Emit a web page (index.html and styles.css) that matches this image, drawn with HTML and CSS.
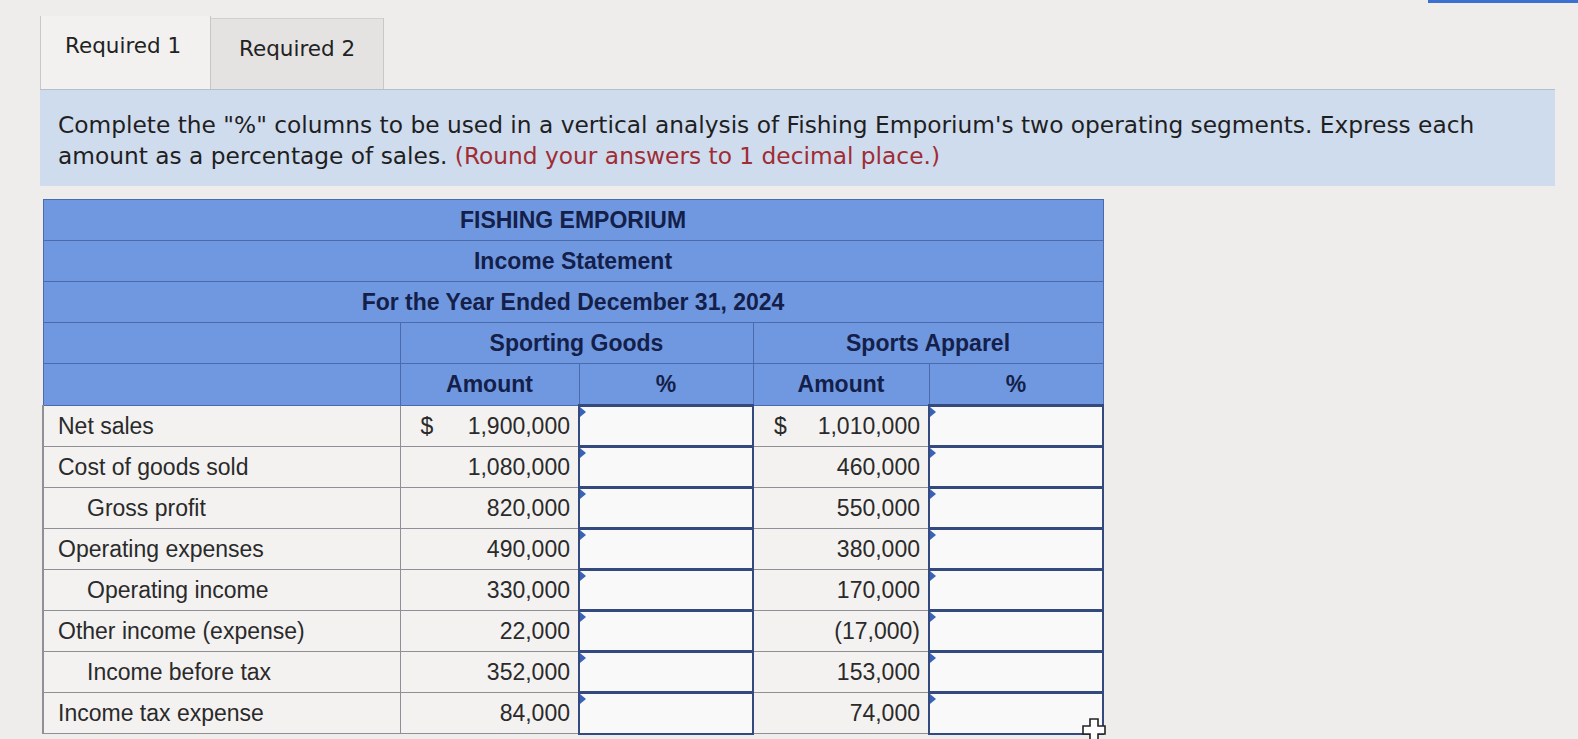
FILE: index.html
```html
<!DOCTYPE html>
<html>
<head>
<meta charset="utf-8">
<link rel="stylesheet" href="styles.css">
</head>
<body>
<div class="topbar"></div>
<div class="page">
  <div class="tabs">
    <div class="tab active">Required 1</div>
    <div class="tab">Required 2</div>
  </div>
  <div class="instr">
    <div class="line">Complete the "%" columns to be used in a vertical analysis of Fishing Emporium's two operating segments. Express each</div>
    <div class="line"><span>amount as a percentage of sales.</span> <span class="red">(Round your answers to 1 decimal place.)</span></div>
  </div>
  <table class="stmt">
    <colgroup>
      <col class="c-label"><col class="c-amt"><col class="c-pct"><col class="c-amt2"><col class="c-pct">
    </colgroup>
    <thead>
      <tr><th colspan="5" class="title">FISHING EMPORIUM</th></tr>
      <tr><th colspan="5" class="title">Income Statement</th></tr>
      <tr><th colspan="5" class="title">For the Year Ended December 31, 2024</th></tr>
      <tr><th></th><th colspan="2">Sporting Goods</th><th colspan="2">Sports Apparel</th></tr>
      <tr><th></th><th>Amount</th><th>%</th><th>Amount</th><th>%</th></tr>
    </thead>
    <tbody>
      <tr><td class="lbl">Net sales</td><td class="amt"><span class="dol">$</span>1,900,000</td><td class="inp"><span class="tri"></span></td><td class="amt"><span class="dol">$</span>1,010,000</td><td class="inp"><span class="tri"></span></td></tr>
      <tr><td class="lbl">Cost of goods sold</td><td class="amt">1,080,000</td><td class="inp"><span class="tri"></span></td><td class="amt">460,000</td><td class="inp"><span class="tri"></span></td></tr>
      <tr><td class="lbl ind">Gross profit</td><td class="amt">820,000</td><td class="inp"><span class="tri"></span></td><td class="amt">550,000</td><td class="inp"><span class="tri"></span></td></tr>
      <tr><td class="lbl">Operating expenses</td><td class="amt">490,000</td><td class="inp"><span class="tri"></span></td><td class="amt">380,000</td><td class="inp"><span class="tri"></span></td></tr>
      <tr><td class="lbl ind">Operating income</td><td class="amt">330,000</td><td class="inp"><span class="tri"></span></td><td class="amt">170,000</td><td class="inp"><span class="tri"></span></td></tr>
      <tr><td class="lbl">Other income (expense)</td><td class="amt">22,000</td><td class="inp"><span class="tri"></span></td><td class="amt">(17,000)</td><td class="inp"><span class="tri"></span></td></tr>
      <tr><td class="lbl ind">Income before tax</td><td class="amt">352,000</td><td class="inp"><span class="tri"></span></td><td class="amt">153,000</td><td class="inp"><span class="tri"></span></td></tr>
      <tr><td class="lbl">Income tax expense</td><td class="amt">84,000</td><td class="inp"><span class="tri"></span></td><td class="amt">74,000</td><td class="inp last"><span class="tri"></span>
        <svg class="cursor" width="26" height="26" viewBox="0 0 26 26"><path d="M9 2h8v7h7v8h-7v7H9v-7H2V9h7z" fill="#fff" stroke="#222" stroke-width="1.6"/></svg>
      </td></tr>
    </tbody>
  </table>
</div>
</body>
</html>
```

FILE: styles.css
```css
html, body {
  margin: 0;
  padding: 0;
}
body {
  background: #eeedec;
  width: 1578px;
  height: 739px;
  overflow: hidden;
  position: relative;
}
.topbar {
  position: absolute;
  top: 0;
  right: 0;
  width: 150px;
  height: 3px;
  background: #3d6fd0;
}
.page {
  padding: 16px 0 0 40px;
}
.tabs {
  display: flex;
  align-items: flex-end;
  height: 73px;
}
.tab {
  font-family: "DejaVu Sans", Verdana, sans-serif;
  font-size: 21.5px;
  color: #222;
  box-sizing: border-box;
  height: 73px;
  padding: 17px 0 0 24px;
}
.tab.active {
  width: 171px;
  border-left: 1px solid #c9c7c4;
  border-right: 1px solid #c9c7c4;
  background: #f2f1f0;
}
.tab:not(.active) {
  width: 173px;
  height: 71px;
  background: #e4e3e2;
  border-top: 1px solid #d2d0cd;
  border-right: 1px solid #c9c7c4;
  padding-top: 17px;
  padding-left: 28px;
}
.instr {
  width: 1515px;
  box-sizing: border-box;
  background: #cfdcee;
  border-top: 1px solid #b5bfca;
  font-family: "DejaVu Sans", Verdana, sans-serif;
  font-size: 23.3px;
  line-height: 31px;
  color: #1f1f1f;
  padding: 19px 20px 15px 18px;
}
.line {
  white-space: nowrap;
}
.red {
  color: #a02c34;
}
.stmt {
  margin-top: 13px;
  margin-left: 2px;
  border-collapse: collapse;
  table-layout: fixed;
  width: 1060px;
  font-family: "Liberation Sans", Arial, sans-serif;
  font-size: 23px;
}
.c-label { width: 357px; }
.c-amt { width: 179px; }
.c-amt2 { width: 176px; }
.c-pct { width: 174px; }
.stmt th {
  background: #6f98e0;
  color: #14204a;
  font-weight: bold;
  height: 40px;
  padding: 0;
  border: 1px solid #4a6cae;
  text-align: center;
  font-size: 23px;
}
.stmt td {
  height: 41px;
  padding: 0;
  border: 1px solid #8e9096;
  background: #f3f2f1;
  color: #2a2a2a;
  box-sizing: border-box;
}
.lbl {
  padding-left: 14px !important;
  border-left: 2px solid #8e9096 !important;
}
.lbl.ind {
  padding-left: 43px !important;
}
.amt {
  text-align: right;
  padding-right: 8px !important;
}
.dol {
  float: left;
  padding-left: 20px;
}
.stmt td.inp {
  background: #f9f9f9;
  border: 2px solid #34497e;
  border-top-width: 3px;
  position: relative;
}
.tri {
  position: absolute;
  top: 0;
  left: 0;
  width: 0;
  height: 0;
  border-top: 5px solid transparent;
  border-bottom: 5px solid transparent;
  border-left: 6px solid #3a63b8;
}
.cursor {
  position: absolute;
  right: -5px;
  bottom: -10px;
}
```
